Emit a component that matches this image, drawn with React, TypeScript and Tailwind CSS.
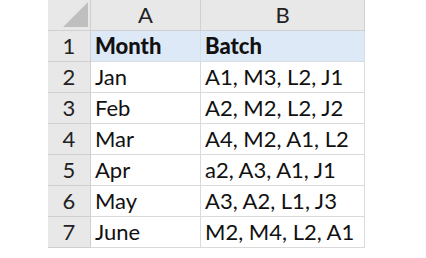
import React from "react";

const rows: [string, string][] = [
  ["Jan", "A1, M3, L2, J1"],
  ["Feb", "A2, M2, L2, J2"],
  ["Mar", "A4, M2, A1, L2"],
  ["Apr", "a2, A3, A1, J1"],
  ["May", "A3, A2, L1, J3"],
  ["June", "M2, M4, L2, A1"],
];

export default function App() {
  return (
    <div className="w-[426px] h-[258px] bg-white text-[#111] overflow-hidden" style={{ fontFamily: "Lato, 'Open Sans', sans-serif" }}>
      <div className="ml-[48px] grid grid-cols-[43px_110px_164px] w-[318px] text-[22px] leading-none">
        {/* header row */}
        <div className="h-[31px] bg-[#e8e8e8] border-r border-b border-[#d0d0d0] relative">
          <div className="absolute right-[2px] bottom-[3px] w-0 h-0 border-l-[25px] border-l-transparent border-b-[25px] border-b-[#bfbfbf]" />
        </div>
        <div className="h-[31px] bg-[#e8e8e8] border-r border-b border-[#d0d0d0] flex items-center justify-center text-[#222]">A</div>
        <div className="h-[31px] bg-[#e8e8e8] border-r border-b border-[#d0d0d0] flex items-center justify-center text-[#222]">B</div>
        {/* row 1 */}
        <div className="h-[31px] bg-[#e8e8e8] border-r border-b border-[#d0d0d0] flex items-center justify-center text-[#222]">1</div>
        <div className="h-[31px] bg-[#dde9f6] border-r border-b border-[#d6dde6] flex items-center pl-[4px] font-black">Month</div>
        <div className="h-[31px] bg-[#dde9f6] border-r border-b border-[#d6dde6] flex items-center pl-[4px] font-black">Batch</div>
        {rows.map(([m, b], i) => (
          <React.Fragment key={m}>
            <div className="h-[31px] bg-[#e8e8e8] border-r border-b border-[#d0d0d0] flex items-center justify-center text-[#222]">{i + 2}</div>
            <div className="h-[31px] border-r border-b border-[#dadada] flex items-center pl-[4px]">{m}</div>
            <div className="h-[31px] border-r border-b border-[#dadada] flex items-center pl-[4px]">{b}</div>
          </React.Fragment>
        ))}
      </div>
    </div>
  );
}
